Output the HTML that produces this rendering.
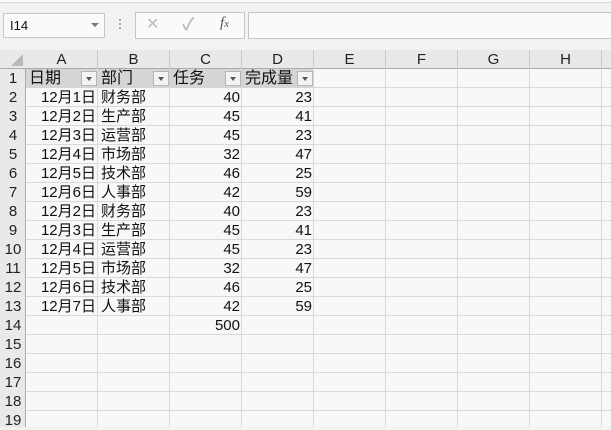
<!DOCTYPE html>
<html><head><meta charset="utf-8"><style>
*{margin:0;padding:0;box-sizing:border-box}
body{width:611px;height:427px;overflow:hidden;background:#f2f2f2;font-family:"Liberation Sans","Noto Sans CJK SC",sans-serif;position:relative}
.a{position:absolute}
.grid{left:26px;top:69px;width:585px;height:358px;background-color:#f8f8f8;
background-image:repeating-linear-gradient(to right,transparent 0 71px,#d9d9d9 71px 72px),repeating-linear-gradient(to bottom,transparent 0 18px,#d9d9d9 18px 19px)}
.t{position:absolute;font-size:15px;line-height:19px;height:19px;color:#111;white-space:nowrap}
.r{text-align:right}
.rh{position:absolute;left:0;width:26px;font-size:15px;line-height:19px;text-align:center;color:#222}
.ch{position:absolute;top:50px;height:19px;font-size:15px;line-height:19px;text-align:center;color:#222;border-right:1px solid #c8c8c8}
.fb{position:absolute;top:71px;width:16px;height:15px;background:#f3f3f3;border:1px solid #b5b5b5}
.fb:after{content:"";position:absolute;left:4px;top:5px;border-left:3.5px solid transparent;border-right:3.5px solid transparent;border-top:4px solid #555}
</style></head><body>
<div class="a" style="left:0;top:0;width:611px;height:2px;background:#fafafa"></div>
<div class="a" style="left:0;top:2px;width:611px;height:1px;background:#d6d6d6"></div>
<div class="a" style="left:3px;top:13px;width:102px;height:25px;background:#fafafa;border:1px solid #c6c6c6"></div>
<div class="t" style="left:10px;top:16px;font-size:13px">I14</div>
<div class="a" style="left:91px;top:23px;border-left:4px solid transparent;border-right:4px solid transparent;border-top:4px solid #777"></div>
<div class="a" style="left:119px;top:19px;width:2px;height:2px;background:#aaa;box-shadow:0 4px #aaa,0 8px #aaa"></div>
<div class="a" style="left:135px;top:12px;width:110px;height:27px;background:#fafafa;border:1px solid #c6c6c6"></div>
<div class="t" style="left:146px;top:15px;color:#bbb;font-size:16px">✕</div>
<div class="t" style="left:182px;top:15px;color:#bbb;font-size:17px;font-weight:bold">✓</div>
<div class="t" style="left:220px;top:14px;color:#555;font-family:'Liberation Serif',serif;font-style:italic;font-size:15px">f<span style="font-size:11px">x</span></div>
<div class="a" style="left:248px;top:12px;width:370px;height:27px;background:#fafafa;border:1px solid #c6c6c6"></div>
<div class="a" style="left:0;top:50px;width:611px;height:19px;background:#e9e9e9;border-bottom:1px solid #ababab"></div>
<div class="a" style="left:0;top:69px;width:26px;height:358px;background:#e9e9e9;border-right:1px solid #ababab"></div>
<div class="a" style="left:11px;top:54px;border-left:12px solid transparent;border-bottom:12px solid #b9b9b9"></div>
<div class="ch" style="left:26px;width:72px">A</div>
<div class="ch" style="left:98px;width:72px">B</div>
<div class="ch" style="left:170px;width:72px">C</div>
<div class="ch" style="left:242px;width:72px">D</div>
<div class="ch" style="left:314px;width:72px">E</div>
<div class="ch" style="left:386px;width:72px">F</div>
<div class="ch" style="left:458px;width:72px">G</div>
<div class="ch" style="left:530px;width:72px">H</div>
<div class="a grid"></div>
<div class="a" style="left:26px;top:69px;width:288px;height:19px;background:#d5d5d5;border-right:1px solid #d9d9d9"></div>
<div class="rh" style="top:69px">1</div><div class="rh" style="top:88px">2</div><div class="rh" style="top:107px">3</div><div class="rh" style="top:126px">4</div><div class="rh" style="top:145px">5</div><div class="rh" style="top:164px">6</div><div class="rh" style="top:183px">7</div><div class="rh" style="top:202px">8</div><div class="rh" style="top:221px">9</div><div class="rh" style="top:240px">10</div><div class="rh" style="top:259px">11</div><div class="rh" style="top:278px">12</div><div class="rh" style="top:297px">13</div><div class="rh" style="top:316px">14</div><div class="rh" style="top:335px">15</div><div class="rh" style="top:354px">16</div><div class="rh" style="top:373px">17</div><div class="rh" style="top:392px">18</div><div class="rh" style="top:411px">19</div>
<div class="t" style="left:29px;top:69px;font-size:16px">日期</div>
<div class="t" style="left:101px;top:69px;font-size:16px">部门</div>
<div class="t" style="left:173px;top:69px;font-size:16px">任务</div>
<div class="t" style="left:245px;top:69px;font-size:16px">完成量</div>
<div class="fb" style="left:81px"></div><div class="fb" style="left:153px"></div><div class="fb" style="left:225px"></div><div class="fb" style="left:297px"></div>
<div class="t r" style="left:26px;width:70px;top:88px">12月1日</div><div class="t" style="left:101px;top:88px">财务部</div><div class="t r" style="left:170px;width:70px;top:88px">40</div><div class="t r" style="left:242px;width:70px;top:88px">23</div>
<div class="t r" style="left:26px;width:70px;top:107px">12月2日</div><div class="t" style="left:101px;top:107px">生产部</div><div class="t r" style="left:170px;width:70px;top:107px">45</div><div class="t r" style="left:242px;width:70px;top:107px">41</div>
<div class="t r" style="left:26px;width:70px;top:126px">12月3日</div><div class="t" style="left:101px;top:126px">运营部</div><div class="t r" style="left:170px;width:70px;top:126px">45</div><div class="t r" style="left:242px;width:70px;top:126px">23</div>
<div class="t r" style="left:26px;width:70px;top:145px">12月4日</div><div class="t" style="left:101px;top:145px">市场部</div><div class="t r" style="left:170px;width:70px;top:145px">32</div><div class="t r" style="left:242px;width:70px;top:145px">47</div>
<div class="t r" style="left:26px;width:70px;top:164px">12月5日</div><div class="t" style="left:101px;top:164px">技术部</div><div class="t r" style="left:170px;width:70px;top:164px">46</div><div class="t r" style="left:242px;width:70px;top:164px">25</div>
<div class="t r" style="left:26px;width:70px;top:183px">12月6日</div><div class="t" style="left:101px;top:183px">人事部</div><div class="t r" style="left:170px;width:70px;top:183px">42</div><div class="t r" style="left:242px;width:70px;top:183px">59</div>
<div class="t r" style="left:26px;width:70px;top:202px">12月2日</div><div class="t" style="left:101px;top:202px">财务部</div><div class="t r" style="left:170px;width:70px;top:202px">40</div><div class="t r" style="left:242px;width:70px;top:202px">23</div>
<div class="t r" style="left:26px;width:70px;top:221px">12月3日</div><div class="t" style="left:101px;top:221px">生产部</div><div class="t r" style="left:170px;width:70px;top:221px">45</div><div class="t r" style="left:242px;width:70px;top:221px">41</div>
<div class="t r" style="left:26px;width:70px;top:240px">12月4日</div><div class="t" style="left:101px;top:240px">运营部</div><div class="t r" style="left:170px;width:70px;top:240px">45</div><div class="t r" style="left:242px;width:70px;top:240px">23</div>
<div class="t r" style="left:26px;width:70px;top:259px">12月5日</div><div class="t" style="left:101px;top:259px">市场部</div><div class="t r" style="left:170px;width:70px;top:259px">32</div><div class="t r" style="left:242px;width:70px;top:259px">47</div>
<div class="t r" style="left:26px;width:70px;top:278px">12月6日</div><div class="t" style="left:101px;top:278px">技术部</div><div class="t r" style="left:170px;width:70px;top:278px">46</div><div class="t r" style="left:242px;width:70px;top:278px">25</div>
<div class="t r" style="left:26px;width:70px;top:297px">12月7日</div><div class="t" style="left:101px;top:297px">人事部</div><div class="t r" style="left:170px;width:70px;top:297px">42</div><div class="t r" style="left:242px;width:70px;top:297px">59</div>
<div class="t r" style="left:170px;width:70px;top:316px">500</div>
</body></html>
